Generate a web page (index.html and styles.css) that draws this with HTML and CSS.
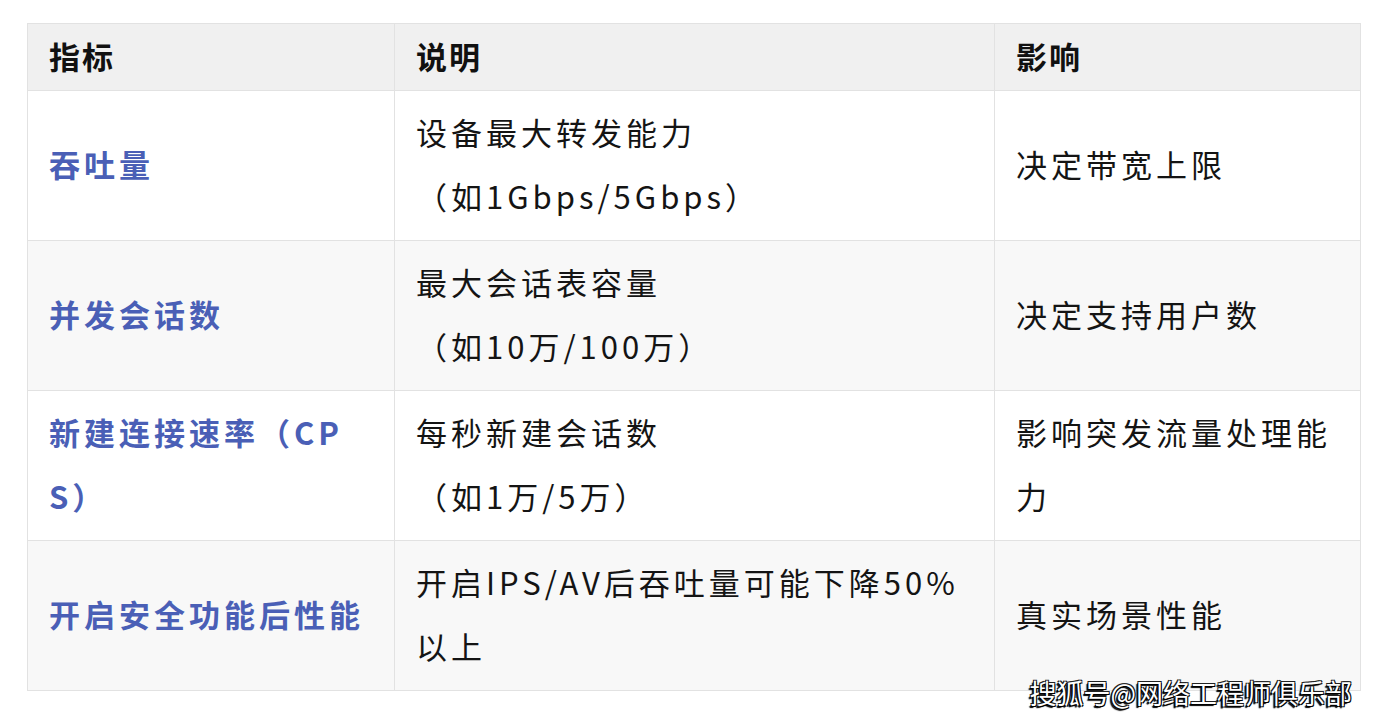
FILE: index.html
```html
<!DOCTYPE html>
<html lang="zh-CN">
<head>
<meta charset="utf-8">
<title>防火墙性能指标</title>
<link rel="stylesheet" href="styles.css">
</head>
<body>
<div class="page">
  <table class="spec">
    <colgroup>
      <col class="c1"><col class="c2"><col class="c3">
    </colgroup>
    <thead>
      <tr class="head"><th>指标</th><th>说明</th><th>影响</th></tr>
    </thead>
    <tbody>
      <tr class="row">
        <td class="key">吞吐量</td>
        <td>设备最大转发能力<br>（如1Gbps/5Gbps）</td>
        <td>决定带宽上限</td>
      </tr>
      <tr class="row alt">
        <td class="key">并发会话数</td>
        <td>最大会话表容量<br>（如10万/100万）</td>
        <td>决定支持用户数</td>
      </tr>
      <tr class="row">
        <td class="key">新建连接速率（CPS）</td>
        <td>每秒新建会话数<br>（如1万/5万）</td>
        <td>影响突发流量处理能力</td>
      </tr>
      <tr class="row alt">
        <td class="key">开启安全功能后性能</td>
        <td>开启IPS/AV后吞吐量可能下降50%以上</td>
        <td>真实场景性能</td>
      </tr>
    </tbody>
  </table>
  <div class="watermark">搜狐号@网络工程师俱乐部</div>
</div>
</body>
</html>
```
FILE: styles.css
```css
html, body {
  margin: 0;
  padding: 0;
  background: #ffffff;
}
.page {
  position: relative;
  width: 1386px;
  height: 722px;
  padding: 23px 0 0 27px;
  box-sizing: border-box;
  font-family: "Noto Sans CJK SC", "Noto Sans", sans-serif;
  color: #141414;
}
.spec {
  border-collapse: collapse;
  table-layout: fixed;
  width: 1333px;
  font-size: 31px;
  letter-spacing: 4px;
  line-height: 64px;
}
.c1 { width: 367px; }
.c2 { width: 600px; }
.c3 { width: 366px; }
.spec th, .spec td {
  border: 1px solid #e2e2e2;
  padding: 0 20px 3px 21px;
  text-align: left;
  vertical-align: middle;
  word-break: break-all;
}
.head th {
  height: 63px;
  line-height: 58px;
  background: #f0f0f0;
  font-weight: 700;
  color: #111111;
  letter-spacing: 2px;
}
.row td {
  height: 146px;
  background: #ffffff;
  font-weight: 400;
}
.row.alt td {
  background: #f8f8f8;
}
.row td.key {
  color: #4a5fb6;
  font-weight: 700;
}
.watermark {
  position: absolute;
  right: 34px;
  top: 675px;
  font-size: 27px;
  line-height: 36px;
  color: #ffffff;
  letter-spacing: 0;
  text-shadow: -1px 1px 0 #000, 1px 1px 0 #000, -1px -1px 0 #222, 1px -1px 0 #222, -2px 2px 1px #000;
}
```
